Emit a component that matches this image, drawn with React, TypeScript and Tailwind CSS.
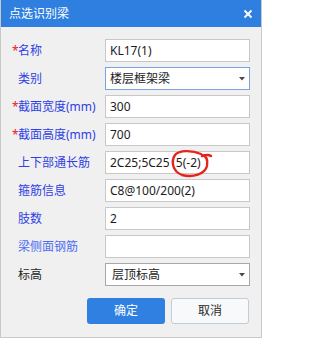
import type { ReactNode } from 'react'

type Row = {
  label: string
  required?: boolean
  tone?: 'blue' | 'light' | 'dark'
  value: string
  kind?: 'input' | 'select' | 'selectFocus'
}

const rows: Row[] = [
  { label: '名称', required: true, value: 'KL17(1)' },
  { label: '类别', value: '楼层框架梁', kind: 'selectFocus' },
  { label: '截面宽度(mm)', required: true, value: '300' },
  { label: '截面高度(mm)', required: true, value: '700' },
  { label: '上下部通长筋', value: '2C25;5C25  5(-2)' },
  { label: '箍筋信息', value: 'C8@100/200(2)' },
  { label: '肢数', value: '2' },
  { label: '梁侧面钢筋', tone: 'light', value: '' },
  { label: '标高', tone: 'dark', value: '层顶标高', kind: 'select' },
]

function Caret() {
  return (
    <svg width="6" height="4" viewBox="0 0 6 4" className="shrink-0">
      <path d="M0 0 L6 0 L3 3.5 Z" fill="#4a4a4a" />
    </svg>
  )
}

function Field({ row }: { row: Row }) {
  const kind = row.kind ?? 'input'
  let box = 'border-[#c8c8c8] pl-[4px]'
  if (kind === 'selectFocus') box = 'border-[#7aa3e2] pl-[4px]'
  if (kind === 'select') box = 'border-[#a8a8a8] pl-[6px]'
  let content: ReactNode = <span className="truncate whitespace-pre">{row.value}</span>
  return (
    <div
      className={`flex h-[23px] w-[145px] items-center justify-between border bg-white pr-[4px] text-[12px] text-[#1c1c1c] ${box}`}
    >
      {content}
      {kind !== 'input' && <Caret />}
    </div>
  )
}

export default function App() {
  return (
    <div className="relative h-[338px] w-[262px] overflow-hidden border-x border-b border-[#c9c9c9] bg-[#f0f0f0] font-['Noto_Sans','Noto_Sans_CJK_SC',sans-serif]">
      {/* Title bar */}
      <div className="-mx-px flex h-[27px] items-center justify-between bg-[#2e7fe0] pl-[9px] pr-[9px] text-[12px] text-white">
        <span>点选识别梁</span>
        <svg width="10" height="10" viewBox="0 0 10 10">
          <path d="M1.5 1.5 L8.5 8.5 M8.5 1.5 L1.5 8.5" stroke="#fff" strokeWidth="1.8" />
        </svg>
      </div>

      {/* Form */}
      <div className="flex flex-col gap-[5px] pl-[11px] pt-[12px]">
        {rows.map((row) => {
          const color =
            row.tone === 'dark'
              ? 'text-[#1f1f1f]'
              : row.tone === 'light'
                ? 'text-[#4d6cf0]'
                : 'text-[#2f3fe4]'
          return (
            <div key={row.label} className="flex items-center">
              <div className={`flex w-[93px] items-center text-[12px] ${color}`}>
                <span className="w-[6px] text-[#e52222]">{row.required ? '*' : ''}</span>
                <span className="whitespace-nowrap">{row.label}</span>
              </div>
              <Field row={row} />
            </div>
          )
        })}
      </div>

      {/* Buttons */}
      <div className="ml-[86px] mt-[12px] flex gap-[6px] text-[12px]">
        <button className="h-[26px] w-[78px] rounded-[3px] bg-[#2f80e0] text-white">确定</button>
        <button className="h-[26px] w-[78px] rounded-[3px] border border-[#c4cbd6] bg-[#f8f9fb] text-[#2a2a2a]">
          取消
        </button>
      </div>

      {/* red hand-drawn mark */}
      <svg
        className="pointer-events-none absolute left-0 top-0"
        width="262"
        height="338"
        viewBox="0 0 262 338"
        fill="none"
      >
        <path
          d="M200 154 C191 150 178 150 174 155 C170 161 171 171 181 175 C192 178 204 174 206 166 C207 160 205 156 201 155 M201 156 C204 155 207 154 210 156"
          stroke="#e8221c"
          strokeWidth="2.4"
          strokeLinecap="round"
        />
      </svg>
    </div>
  )
}
